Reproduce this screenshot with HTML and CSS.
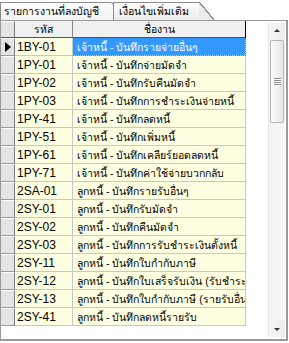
FILE: index.html
```html
<!DOCTYPE html>
<html lang="th">
<head>
    <meta charset="UTF-8">
    <title>รายการงานที่ลงบัญชี</title>
    <link rel="stylesheet" href="styles.css">
</head>
<body>
    <div class="tabs">
        <div class="tab active">รายการงานที่ลงบัญชี</div>
        <div class="tab">เงื่อนไขเพิ่มเติม</div>
    </div>

    <div class="panel">
        <div class="grid">
            <div class="row head">
                <div class="ind"></div>
                <div class="cell">รหัส</div>
                <div class="cell">ชื่องาน</div>
            </div>
            <div class="row current">
                <div class="ind"><span class="arrow"></span></div>
                <div class="cell">1BY-01</div>
                <div class="cell selected">เจ้าหนี้ - บันทึกรายจ่ายอื่นๆ</div>
            </div>
            <div class="row"><div class="ind"></div><div class="cell">1PY-01</div><div class="cell">เจ้าหนี้ - บันทึกจ่ายมัดจำ</div></div>
            <div class="row"><div class="ind"></div><div class="cell">1PY-02</div><div class="cell">เจ้าหนี้ - บันทึกรับคืนมัดจำ</div></div>
            <div class="row"><div class="ind"></div><div class="cell">1PY-03</div><div class="cell">เจ้าหนี้ - บันทึกการชำระเงินจ่ายหนี้</div></div>
            <div class="row"><div class="ind"></div><div class="cell">1PY-41</div><div class="cell">เจ้าหนี้ - บันทึกลดหนี้</div></div>
            <div class="row"><div class="ind"></div><div class="cell">1PY-51</div><div class="cell">เจ้าหนี้ - บันทึกเพิ่มหนี้</div></div>
            <div class="row"><div class="ind"></div><div class="cell">1PY-61</div><div class="cell">เจ้าหนี้ - บันทึกเคลียร์ยอดลดหนี้</div></div>
            <div class="row"><div class="ind"></div><div class="cell">1PY-71</div><div class="cell">เจ้าหนี้ - บันทึกค่าใช้จ่ายบวกกลับ</div></div>
            <div class="row"><div class="ind"></div><div class="cell">2SA-01</div><div class="cell">ลูกหนี้ - บันทึกรายรับอื่นๆ</div></div>
            <div class="row"><div class="ind"></div><div class="cell">2SY-01</div><div class="cell">ลูกหนี้ - บันทึกรับมัดจำ</div></div>
            <div class="row"><div class="ind"></div><div class="cell">2SY-02</div><div class="cell">ลูกหนี้ - บันทึกคืนมัดจำ</div></div>
            <div class="row"><div class="ind"></div><div class="cell">2SY-03</div><div class="cell">ลูกหนี้ - บันทึกการรับชำระเงินตั้งหนี้</div></div>
            <div class="row"><div class="ind"></div><div class="cell">2SY-11</div><div class="cell">ลูกหนี้ - บันทึกใบกำกับภาษี</div></div>
            <div class="row"><div class="ind"></div><div class="cell">2SY-12</div><div class="cell">ลูกหนี้ - บันทึกใบเสร็จรับเงิน (รับชำระหนี้)</div></div>
            <div class="row"><div class="ind"></div><div class="cell">2SY-13</div><div class="cell">ลูกหนี้ - บันทึกใบกำกับภาษี (รายรับอื่นๆ)</div></div>
            <div class="row"><div class="ind"></div><div class="cell">2SY-41</div><div class="cell">ลูกหนี้ - บันทึกลดหนี้รายรับ</div></div>
        </div>

        <div class="scrollbar">
            <div class="sb-btn up"></div>
            <div class="sb-track">
                <div class="sb-thumb"><span class="grip"></span></div>
            </div>
            <div class="sb-btn down"></div>
        </div>
    </div>
</body>
</html>
```

FILE: styles.css
```css
* {
    margin: 0;
    padding: 0;
    box-sizing: border-box;
}

body {
    font-family: 'Liberation Sans Narrow', 'Liberation Sans', 'Noto Sans', sans-serif;
    font-size: 12px;
    color: #000;
    background: #fff;
    width: 289px;
    height: 343px;
    overflow: hidden;
}

/* tab strip */
.tabs {
    display: flex;
    height: 20px;
    padding-top: 2px;
    background: #fff;
}

.tab {
    height: 18px;
    line-height: 17px;
    padding: 0 4px 0 3px;
    font-size: 10.5px;
    background: linear-gradient(#fdfdfd, #ececec);
    border: 1px solid #8c8c8c;
    border-bottom: none;
    border-radius: 0 4px 0 0;
    white-space: nowrap;
    overflow: hidden;
}

.tab.active {
    width: 114px;
    z-index: 1;
    background: linear-gradient(#ffffff, #f2f2f2);
}

.tab + .tab {
    width: 86px;
    margin-left: -1px;
    padding-left: 5px;
    border-radius: 0;
    border-right: none;
    position: relative;
    overflow: visible;
}

/* slanted right side of the back tab */
.tab + .tab::after {
    content: '';
    position: absolute;
    top: -1px;
    right: -15px;
    width: 15px;
    height: 18px;
    background: linear-gradient(to top right, #ececec 47%, #8c8c8c 48%, #8c8c8c 53%, transparent 54%);
}

/* grid panel */
.panel {
    display: flex;
    height: 321px;
    width: 288px;
    border: 1px solid #9a9a9a;
    border-right-width: 2px;
    border-bottom-width: 2px;
    background: #fff;
}

.grid {
    width: 245px;
}

.row {
    display: grid;
    grid-template-columns: 14px 58px 173px;
    height: 18px;
    background: #ffffe1;
}

.cell {
    border-right: 1px solid #c8c8c8;
    border-bottom: 1px solid #c8c8c8;
    padding: 2px 0 0 2px;
    line-height: 15px;
    white-space: nowrap;
    overflow: hidden;
}

.cell + .cell {
    padding-left: 4px;
    font-size: 10.5px;
}

.ind {
    background: #e4e4e4;
    border-top: 1px solid #fff;
    border-right: 1px solid #7a7a7a;
    border-bottom: 1px solid #9a9a9a;
    position: relative;
}

.head {
    height: 17px;
    background: #f0f0f0;
}

.head .cell {
    text-align: center;
    padding: 1px 0 0;
    font-size: 10.5px;
    border-bottom: 1px solid #555;
    border-right: 1px solid #888;
}

.head .cell:last-child {
    border-right: 1px solid #000;
}

.head .ind {
    border-bottom: 1px solid #555;
}

.selected {
    background: #3399ff;
    color: #fff;
    outline: 1px dotted #cc6600;
    outline-offset: -1px;
}

.arrow {
    position: absolute;
    left: 4px;
    top: 3px;
    border-left: 6px solid #000;
    border-top: 5px solid transparent;
    border-bottom: 5px solid transparent;
}

/* vertical scrollbar */
.scrollbar {
    width: 17px;
    margin: 2px 0 2px 22px;
    display: flex;
    flex-direction: column;
    background: #f4f4f2;
    border-left: 1px solid #e6e6e6;
}

.sb-btn {
    height: 16px;
    position: relative;
    background: linear-gradient(to right, #f6f6f6, #ececec);
}

.sb-btn::after {
    content: '';
    position: absolute;
    left: 5px;
    border-left: 3px solid transparent;
    border-right: 3px solid transparent;
}

.up::after {
    top: 6px;
    border-bottom: 3px solid #333;
}

.down::after {
    top: 7px;
    border-top: 3px solid #333;
}

.sb-track {
    flex: 1;
    padding-top: 1px;
}

.sb-thumb {
    height: 83px;
    margin: 0 1px;
    border: 1px solid #b4b4b4;
    border-radius: 2px;
    background: linear-gradient(to right, #fbfbfb, #e6e6e6);
    display: flex;
    align-items: center;
    justify-content: center;
}

.grip {
    width: 7px;
    height: 8px;
    background: repeating-linear-gradient(#8a8a8a 0 1px, #fff 1px 2px);
}
```
